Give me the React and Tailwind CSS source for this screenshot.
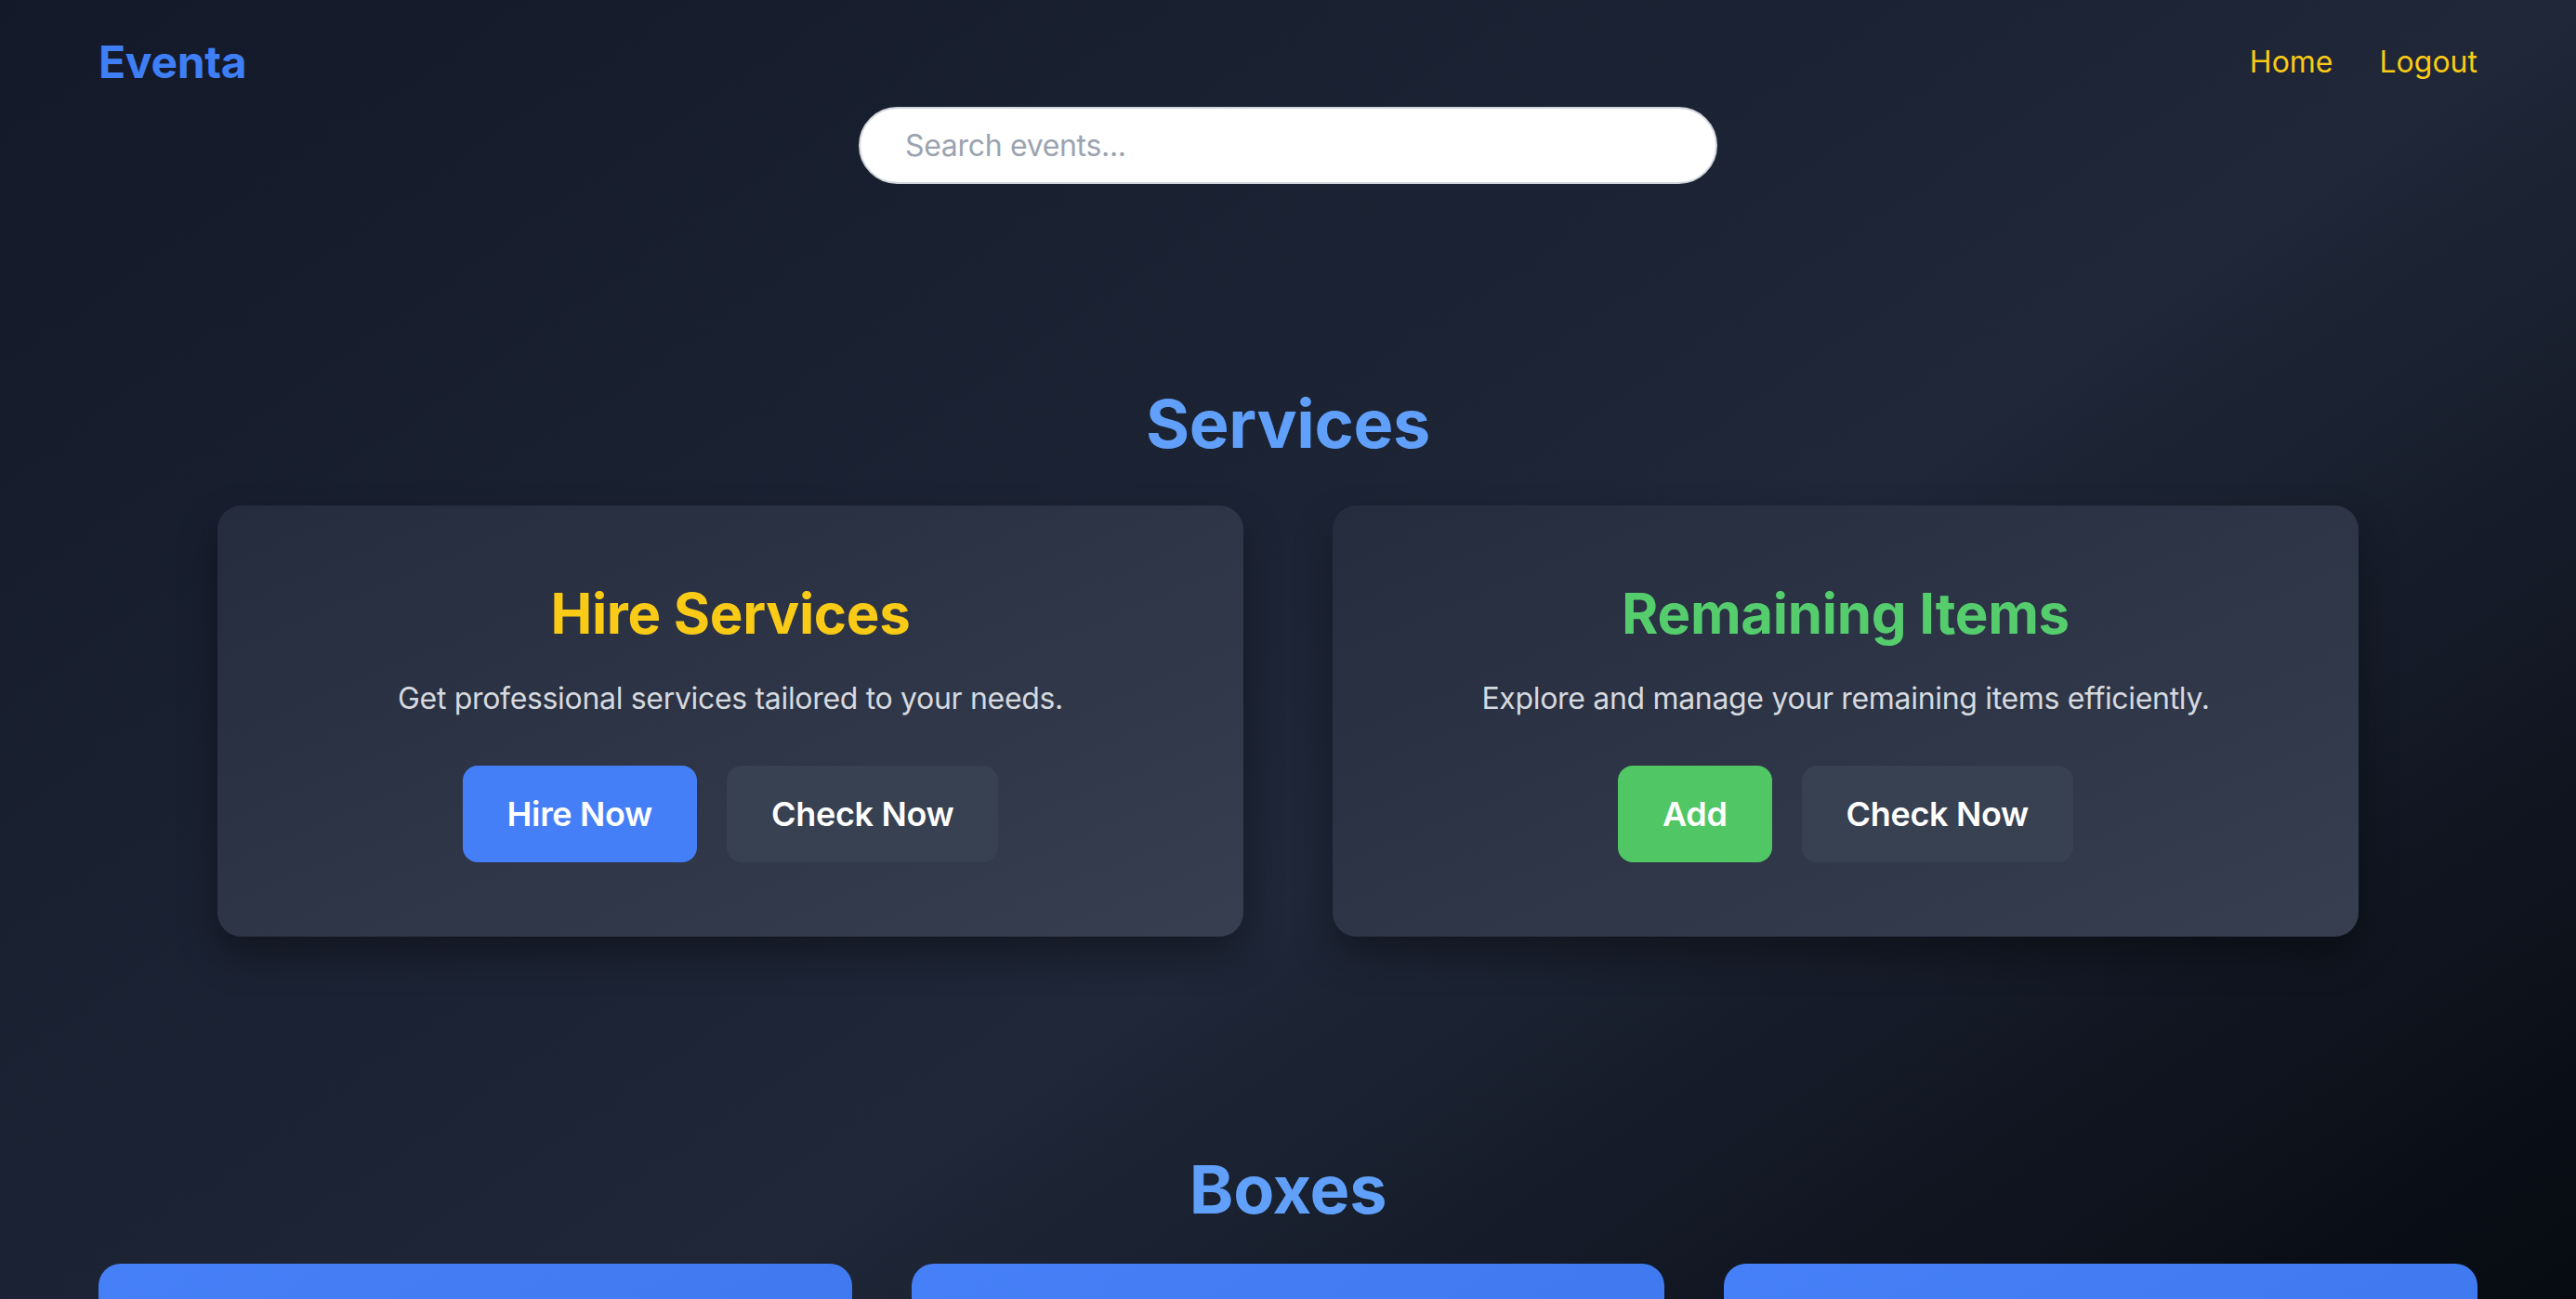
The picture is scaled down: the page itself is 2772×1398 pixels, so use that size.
import React from 'react';

const cards = [
  {
    title: 'Hire Services',
    titleColor: 'text-[#f9cb16]',
    text: 'Get professional services tailored to your needs.',
    primary: 'Hire Now',
    primaryBg: 'bg-[#457ff7] hover:bg-[#3b6fe0]',
  },
  {
    title: 'Remaining Items',
    titleColor: 'text-[#55cd6d]',
    text: 'Explore and manage your remaining items efficiently.',
    primary: 'Add',
    primaryBg: 'bg-[#50c764] hover:bg-[#43b356]',
  },
];

const ServiceCard = ({ card }) => (
  <div className="flex flex-col items-center rounded-[26px] bg-gradient-to-br from-[#242c3d] to-[#363e50] p-[80px] text-center shadow-[0_20px_40px_rgba(0,0,0,0.35)]">
    <h3 className={`text-[60px] font-bold leading-[72px] ${card.titleColor}`}>{card.title}</h3>
    <p className="mt-[32px] text-[32px] leading-[48px] text-[#d6d9df]">{card.text}</p>
    <div className="mt-[48px] flex gap-[32px]">
      <button className={`rounded-[16px] px-[48px] py-[24px] text-[36px] font-semibold leading-[56px] text-white ${card.primaryBg}`}>
        {card.primary}
      </button>
      <button className="rounded-[16px] bg-[#374151] px-[48px] py-[24px] text-[36px] font-semibold leading-[56px] text-white hover:bg-[#414b5c]">
        Check Now
      </button>
    </div>
  </div>
);

export default function App() {
  return (
    <div className="min-h-screen bg-gradient-to-br from-[#131928] via-[#1f2738] to-[#020305] font-['Inter',sans-serif] tracking-[-0.02em] text-white">
      {/* Navbar */}
      <nav className="mx-auto flex h-[99px] max-w-[2560px] items-center justify-between pt-[35px]">
        <a href="#" className="text-[48px] font-bold leading-[64px] text-[#3f7ff6]">Eventa</a>
        <div className="flex gap-[50px] text-[32px] leading-[48px] tracking-normal text-[#f9cb16]">
          <a href="#">Home</a>
          <a href="#">Logout</a>
        </div>
      </nav>

      {/* Search */}
      <div className="mt-[16px] flex justify-center">
        <input
          type="text"
          placeholder="Search events..."
          className="h-[83px] w-1/3 rounded-full border-2 border-[#d1d5db] bg-white px-[48px] text-[32px] text-gray-800 placeholder:text-[#9ca3af] outline-none"
        />
      </div>

      {/* Services */}
      <section className="mt-[218px]">
        <h2 className="text-center text-[72px] font-bold leading-[80px] text-[#60a0fa]">Services</h2>
        <div className="mx-auto mt-[48px] grid max-w-[2304px] grid-cols-2 gap-[96px]">
          {cards.map((card) => (
            <ServiceCard key={card.title} card={card} />
          ))}
        </div>
      </section>

      {/* Boxes */}
      <section className="mt-[232px] pb-[96px]">
        <h2 className="text-center text-[72px] font-bold leading-[80px] text-[#60a0fa]">Boxes</h2>
        <div className="mx-auto mt-[40px] grid max-w-[2560px] grid-cols-3 gap-[64px]">
          {[1, 2, 3].map((i) => (
            <div key={i} className="h-[480px] rounded-[24px] bg-gradient-to-br from-[#4680f8] to-[#3b74e8]" />
          ))}
        </div>
      </section>
    </div>
  );
}
